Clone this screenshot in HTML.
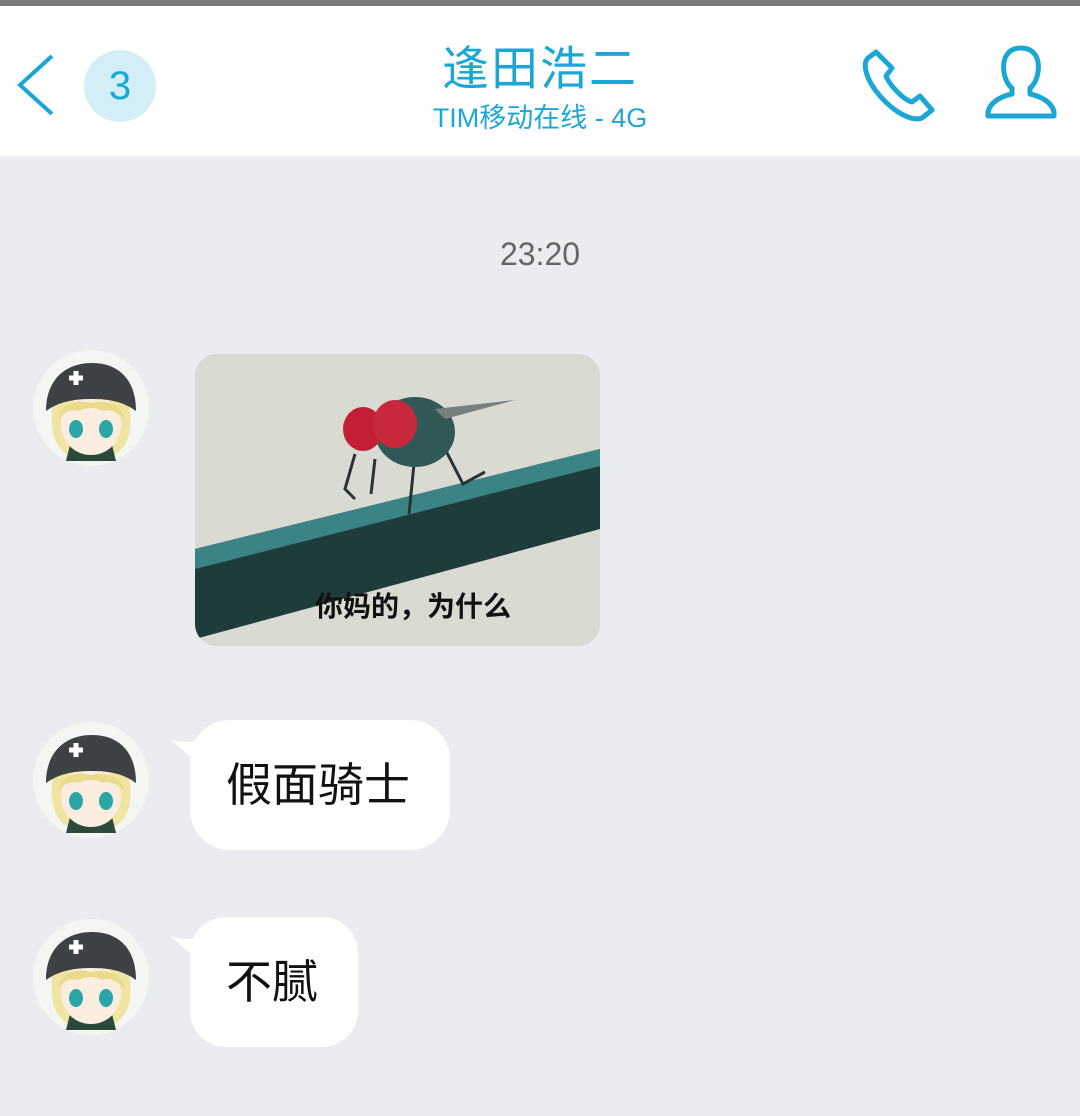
<!DOCTYPE html>
<html><head><meta charset="utf-8"><style>
body{margin:0;width:1080px;height:1116px;background:#ebecf0;font-family:"Liberation Sans","Noto Sans CJK SC",sans-serif;position:relative;overflow:hidden}
.top{position:absolute;left:0;top:0;width:1080px;height:6px;background:#7a7a7a}
.hdr{position:absolute;left:0;top:6px;width:1080px;height:150px;background:#fff}
.t1{position:absolute;left:0;width:1080px;top:24px;text-align:center;color:#1aa7d6;font-size:47px;letter-spacing:2px}
.t2{position:absolute;left:0;width:1080px;top:90px;text-align:center;color:#1aa7d6;font-size:27px}
.badge{position:absolute;left:84px;top:44px;width:72px;height:72px;border-radius:50%;background:#d4eef8;color:#1aa7d6;font-size:40px;text-align:center;line-height:72px}
.time{position:absolute;left:0;width:1080px;top:236px;text-align:center;color:#666;font-size:32px}
.av{position:absolute;left:32px;width:118px;height:118px}
.bub{position:absolute;left:190px;background:#fff;border-radius:40px;font-size:46px;color:#111;line-height:130px;padding:0 40px 0 36px}
.tail{position:absolute;left:170px;width:30px;height:30px}
.img{position:absolute;left:195px;top:354px;width:405px;height:292px;border-radius:22px;overflow:hidden;background:#d8d9d1}
</style></head><body>
<div class="top"></div>
<div class="hdr">
<svg style="position:absolute;left:14px;top:46px" width="44" height="66"><path d="M38 4 L6 33 L38 62" fill="none" stroke="#1aa7d6" stroke-width="4"/></svg>
<div class="badge">3</div>
<div class="t1">逢田浩二</div>
<div class="t2">TIM移动在线 - 4G</div>
<svg style="position:absolute;left:860px;top:40px" width="80" height="80" viewBox="0 0 80 80"><path d="M16 6 L8 12 C2 18 6 34 20 50 C34 66 52 76 62 72 L72 64 L60 50 L52 56 C44 54 30 40 26 30 L32 22 Z" fill="none" stroke="#1aa7d6" stroke-width="5" stroke-linejoin="round"/></svg>
<svg style="position:absolute;left:984px;top:38px" width="74" height="76" viewBox="0 0 74 76"><path d="M37 4 C24 4 18 14 20 28 C21 36 25 42 28 44 L28 50 C18 52 6 58 4 68 L4 72 L70 72 L70 68 C68 58 56 52 46 50 L46 44 C49 42 53 36 54 28 C56 14 50 4 37 4 Z" fill="none" stroke="#1aa7d6" stroke-width="5" stroke-linejoin="round"/></svg>
</div>
<div class="time">23:20</div>

<svg width="0" height="0" style="position:absolute"><defs><g id="a">
<circle cx="59" cy="59" r="58" fill="#f4f6f4"/>
<path d="M20 78 C18 50 24 40 36 50 L82 50 C96 42 100 60 98 80 C96 100 80 112 59 112 C38 112 22 100 20 78Z" fill="#efe4a0"/>
<path d="M38 96 L80 96 L84 112 L34 112Z" fill="#2b4a3c"/>
<ellipse cx="59" cy="76" rx="30" ry="30" fill="#fbeee0"/>
<path d="M26 70 C30 54 44 50 59 54 C74 50 88 54 94 72 C86 62 76 60 70 62 C64 58 54 58 46 62 C40 60 32 62 26 70Z" fill="#e8dc8a"/>
<ellipse cx="44" cy="80" rx="7" ry="9" fill="#2aa6a8"/><ellipse cx="74" cy="80" rx="7" ry="9" fill="#2aa6a8"/>
<path d="M14 62 C14 30 34 14 60 14 C86 14 104 30 104 62 C90 52 76 50 60 50 C44 50 28 52 14 62Z" fill="#3f4244"/>
<path d="M44 22 v14 M37 29 h14" stroke="#fff" stroke-width="5"/>
</g></defs></svg>
<svg class="av" style="top:349px" viewBox="0 0 118 118"><use href="#a"/></svg>
<svg class="av" style="top:721px" viewBox="0 0 118 118"><use href="#a"/></svg>
<svg class="av" style="top:918px" viewBox="0 0 118 118"><use href="#a"/></svg>

<div class="img">
<svg width="405" height="292" viewBox="0 0 405 292">
<rect width="405" height="292" fill="#d9dad2"/>
<path d="M0 195 L405 95 L405 175 L0 285Z" fill="#1f3c3c"/>
<path d="M0 195 L405 95 L405 112 L0 215Z" fill="#3a8486"/>
<g stroke="#263434" stroke-width="3" fill="none"><path d="M160 100 L150 135 L160 145"/><path d="M180 105 L176 140"/><path d="M220 100 L214 160"/><path d="M250 95 L268 130 L290 118"/></g>
<ellipse cx="220" cy="78" rx="40" ry="35" fill="#2f5856"/>
<path d="M240 55 L320 46 L250 65Z" fill="#77807c"/>
<ellipse cx="168" cy="75" rx="20" ry="22" fill="#c21f35"/>
<ellipse cx="200" cy="70" rx="22" ry="24" fill="#c8283c"/>
<text x="120" y="262" font-size="28" font-weight="bold" fill="#111" font-family="Noto Sans CJK SC,sans-serif">你妈的，为什么</text>
</svg></div>

<svg class="tail" style="top:735px" viewBox="0 0 30 30"><path d="M0 4 C10 8 20 8 30 4 L30 30 Z" fill="#fff"/></svg>
<div class="bub" style="top:720px;height:130px">假面骑士</div>
<svg class="tail" style="top:932px" viewBox="0 0 30 30"><path d="M0 4 C10 8 20 8 30 4 L30 30 Z" fill="#fff"/></svg>
<div class="bub" style="top:917px;height:130px;border-radius:36px">不腻</div>
</body></html>
